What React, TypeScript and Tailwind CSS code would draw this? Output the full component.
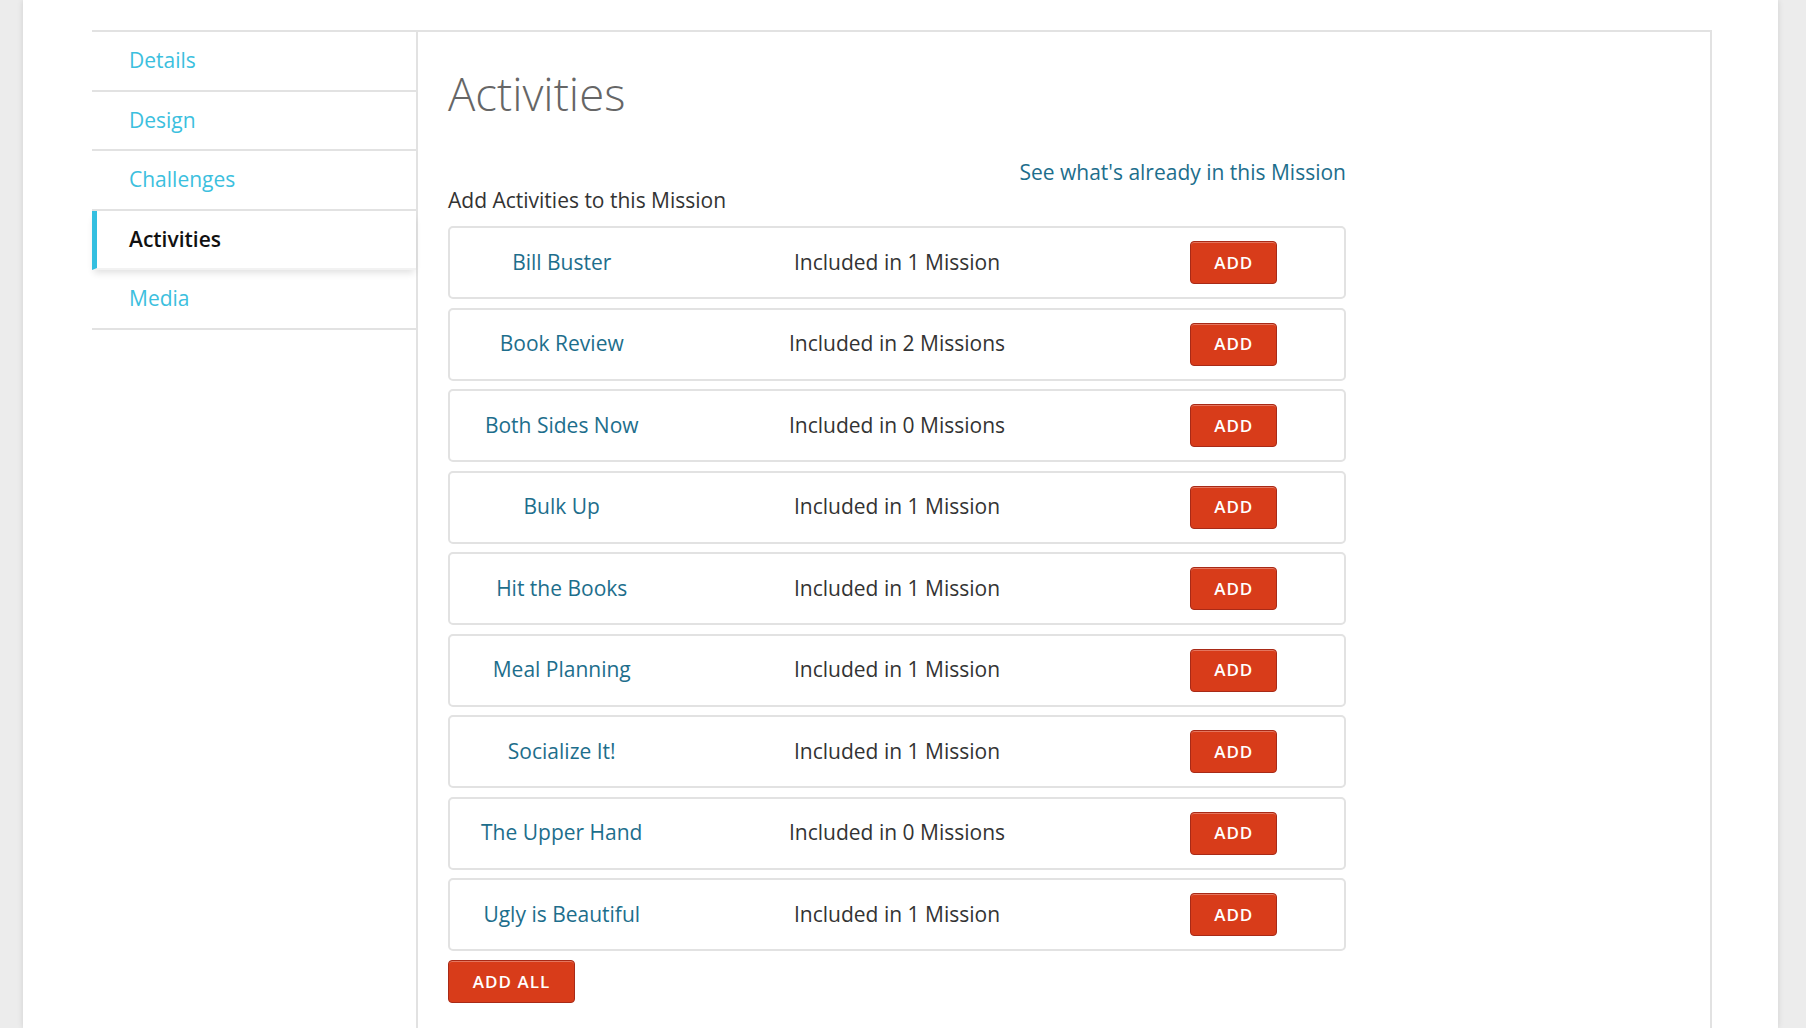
import * as React from "react";

const font = { fontFamily: '"Open Sans", "Noto Sans", sans-serif' };

const NAV = ["Details", "Design", "Challenges", "Activities", "Media"];

const ACTIVITIES: { name: string; count: number }[] = [
  { name: "Bill Buster", count: 1 },
  { name: "Book Review", count: 2 },
  { name: "Both Sides Now", count: 0 },
  { name: "Bulk Up", count: 1 },
  { name: "Hit the Books", count: 1 },
  { name: "Meal Planning", count: 1 },
  { name: "Socialize It!", count: 1 },
  { name: "The Upper Hand", count: 0 },
  { name: "Ugly is Beautiful", count: 1 },
];

function RedButton({ children, className }: { children: React.ReactNode; className?: string }) {
  return (
    <button
      type="button"
      className={
        "flex items-center justify-center rounded-[4px] border border-[#a82a17] bg-[#d83c1a] text-[17px] font-semibold tracking-[1px] text-white shadow-[inset_0_1px_0_rgba(255,255,255,0.3)] " +
        (className ?? "")
      }
    >
      {children}
    </button>
  );
}

function SideNav({ active }: { active: string }) {
  return (
    <nav className="w-[326px] shrink-0 border-r-2 border-[#e2e2e2]">
      {NAV.map((item) =>
        item === active ? (
          <div
            key={item}
            className="relative z-10 flex h-[59.5px] items-center border-b-2 border-l-[5px] border-b-[#f2f2f2] border-l-[#34bfe0] bg-white pl-[32px] text-[21px] font-semibold text-[#111] shadow-[0_5px_7px_-2px_rgba(0,0,0,0.12)]"
          >
            {item}
          </div>
        ) : (
          <a
            key={item}
            href="#"
            className="flex h-[59.5px] items-center border-b-2 border-[#e2e2e2] pl-[37px] text-[21px] text-[#3cc0de]"
          >
            {item}
          </a>
        )
      )}
    </nav>
  );
}

function ActivityRow({ name, count }: { name: string; count: number }) {
  return (
    <div className="grid h-[73px] grid-cols-[1fr_2fr_1fr] items-center rounded-[5px] border-2 border-[#e2e2e2] text-[21px]">
      <a href="#" className="text-center text-[#1d6e8c]">
        {name}
      </a>
      <span className="text-center text-[#333]">
        Included in {count} {count === 1 ? "Mission" : "Missions"}
      </span>
      <div className="flex justify-center pl-[3px]">
        <RedButton className="h-[43px] w-[87px]">ADD</RedButton>
      </div>
    </div>
  );
}

export default function App() {
  return (
    <div className="min-h-screen bg-[#ececec]" style={font}>
      <div className="ml-[23px] flex min-h-screen w-[1755px] flex-col bg-white pl-[69px] pt-[30px] shadow-[0_0_6px_rgba(0,0,0,0.12)]">
        <div className="flex w-[1620px] flex-1 border-r-2 border-t-2 border-[#e2e2e2]">
          <SideNav active="Activities" />
          <main className="flex-1 pl-[30px]">
            <h1 className="mt-[31px] text-[45.5px] font-light leading-[60px] text-[#666]">Activities</h1>
            <div className="w-[898px]">
              <div className="mt-[36px] text-right text-[21px] leading-[26px]">
                <a href="#" className="text-[#1d6e8c]">
                  See what's already in this Mission
                </a>
              </div>
              <p className="mt-[2px] text-[21px] leading-[26px] text-[#333]">Add Activities to this Mission</p>
              <div className="mt-[13px] flex flex-col gap-[8.5px]">
                {ACTIVITIES.map((a) => (
                  <ActivityRow key={a.name} name={a.name} count={a.count} />
                ))}
              </div>
              <RedButton className="mt-[9px] h-[43px] w-[127px]">ADD ALL</RedButton>
            </div>
          </main>
        </div>
      </div>
    </div>
  );
}
